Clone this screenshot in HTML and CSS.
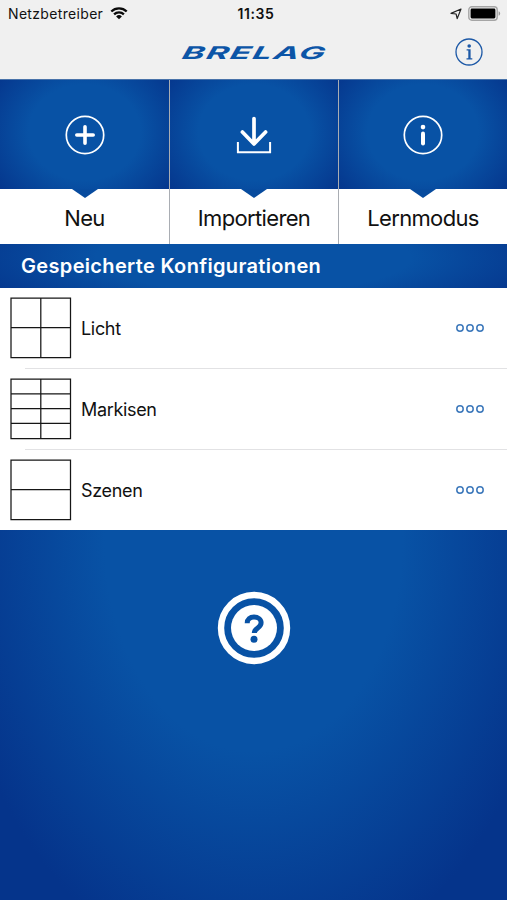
FILE: index.html
```
<!DOCTYPE html>
<html lang="de">
<head>
<meta charset="utf-8">
<title>Brelag</title>
<link rel="stylesheet" href="styles.css">
</head>
<body>
<div class="app">
  <header class="header">
    <div class="status">
      <div class="carrier"><span class="carrier-name">Netzbetreiber</span>
        <svg width="18" height="13" viewBox="0 0 18 13" fill="none" stroke="#0a0a0a" stroke-width="2.3"><path d="M1.3 4.5a11 11 0 0 1 15.4 0M4.1 7.4a7 7 0 0 1 9.8 0"/><path d="M9 12.2 6.1 9.5a4.2 4.2 0 0 1 5.8 0Z" fill="#0a0a0a" stroke="none"/></svg>
      </div>
      <span class="time">11:35</span>
      <div class="power">
        <svg width="12" height="12" viewBox="0 0 12 12" fill="none" stroke="#222" stroke-width="1.2" stroke-linejoin="round"><path d="M11 1 7.2 10.6 6.1 6 1 5.4Z"/></svg>
        <svg width="33" height="15" viewBox="0 0 33 15"><rect x=".8" y=".8" width="28.4" height="13.4" rx="3" fill="none" stroke="#a5a5a5" stroke-width="1.4"/><rect x="2.6" y="2.6" width="24.8" height="9.8" rx="1.3" fill="#000"/><path d="M30.6 5.2q1.5.6 1.5 2.3t-1.5 2.3Z" fill="#999"/></svg>
      </div>
    </div>
    <div class="brand">
      <svg class="logo" width="150" height="18" viewBox="0 0 150 18"><text class="logo-text" x="6" y="15.6" textLength="144" lengthAdjust="spacingAndGlyphs" transform="skewX(-14)">BRELAG</text></svg>
      <svg class="info" width="30" height="30" viewBox="0 0 30 30"><circle cx="15" cy="15" r="13" fill="none" stroke="#1c58a6" stroke-width="1.3"/><circle cx="15.2" cy="9" r="1.8" fill="#1c58a6"/><path d="M12.6 12.2h4v9h1.7v1.2h-5.8v-1.2h1.8v-7.8h-1.7Z" fill="#1c58a6"/></svg>
    </div>
  </header>
  <nav class="tiles">
    <a class="tile">
      <span class="tile-art"><svg width="42" height="42" viewBox="0 0 42 42" fill="none" stroke="#fff"><circle cx="21" cy="21" r="18.7" stroke-width="1.7"/><path d="M21 12.8v16.4M12.8 21h16.4" stroke-width="3.6" stroke-linecap="round"/></svg></span>
      <span class="tile-label">Neu</span>
    </a>
    <a class="tile">
      <span class="tile-art"><svg width="42" height="42" viewBox="0 0 42 42" fill="none" stroke="#fff"><path d="M21 4.5v25M9.4 18 21 30l11.6-12" stroke-width="3.7" stroke-linecap="round" stroke-linejoin="round"/><path d="M4.9 28v10.2h32.2V28" stroke-width="2"/></svg></span>
      <span class="tile-label">Importieren</span>
    </a>
    <a class="tile">
      <span class="tile-art"><svg width="42" height="42" viewBox="0 0 42 42" fill="none" stroke="#fff"><circle cx="21" cy="21" r="18.7" stroke-width="1.7"/><circle cx="21" cy="13.1" r="2.3" fill="#fff" stroke="none"/><path d="M21 19.5v10" stroke-width="4" stroke-linecap="round"/></svg></span>
      <span class="tile-label">Lernmodus</span>
    </a>
  </nav>
  <h2 class="section">Gespeicherte Konfigurationen</h2>
  <ul class="list">
    <li class="row">
      <svg width="62" height="62" viewBox="0 0 62 62" class="thumb"><path d="M1 1h59.5v59.5H1ZM30.8 1v59.5M1 30.5h59.5"/></svg>
      <span class="name">Licht</span>
      <svg class="more" width="30" height="10" viewBox="0 0 30 10"><circle cx="5" cy="5" r="3.2"/><circle cx="15" cy="5" r="3.2"/><circle cx="25" cy="5" r="3.2"/></svg>
    </li>
    <li class="row">
      <svg width="62" height="62" viewBox="0 0 62 62" class="thumb"><path d="M1 1h59.5v59.5H1ZM30.8 1v59.5M1 15.8h59.5M1 30.5h59.5M1 45.3h59.5"/></svg>
      <span class="name">Markisen</span>
      <svg class="more" width="30" height="10" viewBox="0 0 30 10"><circle cx="5" cy="5" r="3.2"/><circle cx="15" cy="5" r="3.2"/><circle cx="25" cy="5" r="3.2"/></svg>
    </li>
    <li class="row">
      <svg width="62" height="62" viewBox="0 0 62 62" class="thumb"><path d="M1 1h59.5v59.5H1ZM1 30.5h59.5"/></svg>
      <span class="name">Szenen</span>
      <svg class="more" width="30" height="10" viewBox="0 0 30 10"><circle cx="5" cy="5" r="3.2"/><circle cx="15" cy="5" r="3.2"/><circle cx="25" cy="5" r="3.2"/></svg>
    </li>
  </ul>
  <main class="help">
    <svg width="74" height="74" viewBox="0 0 74 74"><circle cx="37" cy="37" r="33" fill="none" stroke="#fff" stroke-width="6.4"/><circle cx="37" cy="37" r="23" fill="#fff"/><path d="M30.2 32.2c0-4 2.8-6.1 6.8-6.1s7.1 2.2 7.1 5.7c0 5.2-6.8 5-6.8 10.3" fill="none" stroke="#0852a5" stroke-width="5"/><circle cx="37" cy="48.2" r="3.5" fill="#0852a5"/></svg>
  </main>
</div>
</body>
</html>
```
FILE: styles.css
```
* { box-sizing: border-box; }
body { margin: 0; font-family: Inter, "Liberation Sans", sans-serif; color: #111; }
.app { width: 507px; height: 900px; display: flex; flex-direction: column; overflow: hidden; background: #fff; }
.header { height: 79px; background: #f0f0f0; flex: none; }
.status { height: 27px; padding: 0 6px 0 8px; display: grid; grid-template-columns: 1fr auto 1fr; align-items: center; font-size: 14px; line-height: 27px; }
.carrier { display: flex; align-items: center; gap: 7px; }
.carrier-name { letter-spacing: .33px; }
.time { font-weight: 600; letter-spacing: .6px; margin-left: 3px; }
.power { display: flex; align-items: center; justify-content: flex-end; gap: 6px; }
.brand { height: 50px; display: grid; grid-template-columns: 1fr 150px 1fr; align-items: center; padding: 0 23px 0 24px; }
.logo { grid-column: 2; overflow: visible; }
.logo-text { font: italic 700 17.5px Inter, sans-serif; letter-spacing: .8px; fill: #0c55a7; }
.info { justify-self: end; }
.tiles { height: 165px; flex: none; display: grid; grid-template-columns: repeat(3, 1fr); border-top: 1px solid #4872a9; }
.tile { display: flex; flex-direction: column; }
.tile + .tile { border-left: 1px solid #a9adb3; }
.tile-art { position: relative; height: 109px; display: flex; align-items: center; justify-content: center; padding-top: 1px; background: radial-gradient(ellipse 66% 88% at 50% 48%, #0852a5 50%, #05348b 100%); }
.tile-art::after { content: ""; position: absolute; left: calc(50% - 13px); top: 100%; border: solid transparent; border-width: 9px 13px 0; border-top-color: #074b9e; }
.tile-label { flex: 1; display: flex; align-items: center; justify-content: center; padding-top: 3px; font-size: 22px; letter-spacing: -.66px; }
.section { height: 44px; flex: none; margin: 0; padding: 0 21px; font-size: 20px; font-weight: 600; line-height: 45px; letter-spacing: .34px; color: #fff; background: radial-gradient(ellipse 62% 160% at 50% 30%, #0852a5 50%, #05348b 100%); }
.list { height: 242px; flex: none; list-style: none; margin: 0; padding: 0; display: grid; grid-template-rows: 81px 81px 80px; }
.row { display: flex; align-items: center; padding: 0 22px 1px 10px; background: linear-gradient(#e2e2e4, #e2e2e4) 25px 100% / 100% 1px no-repeat; }
.row:last-child { background: none; padding-bottom: 0; }
.thumb { fill: none; stroke: #161616; stroke-width: 1.25; }
.name { margin-left: 9px; font-size: 18px; padding-top: 1px; letter-spacing: -.33px; }
.more { margin-left: auto; fill: none; stroke: #3c78bb; stroke-width: 1.5; }
.help { flex: 1; display: flex; justify-content: center; align-items: flex-start; padding-top: 61px; background: radial-gradient(ellipse 310px 440px at 50% 10px, #0852a5 48%, #05348b 100%); }
```
